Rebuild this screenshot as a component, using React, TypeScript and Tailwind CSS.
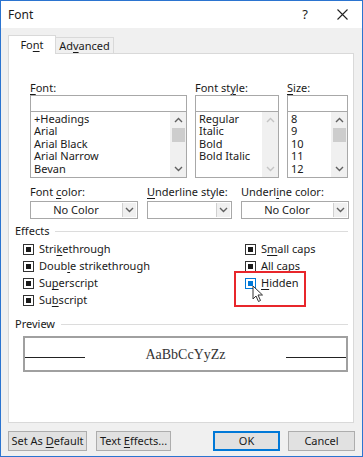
import React from "react";

const U = ({ children }: { children: React.ReactNode }) => <span className="underline underline-offset-2">{children}</span>;

function Check({ active = false }: { active?: boolean }) {
  return (
    <span
      className={`flex h-[11px] w-[11px] shrink-0 items-center justify-center border bg-white ${
        active ? "border-[#0078d7]" : "border-[#333]"
      }`}
    >
      <span className={`h-[5px] w-[5px] ${active ? "bg-[#0078d7]" : "bg-[#1a1a1a]"}`} />
    </span>
  );
}

function CheckRow({ children, active = false }: { children: React.ReactNode; active?: boolean }) {
  return (
    <div className="flex h-[17px] items-center gap-[5px]">
      <Check active={active} />
      <span>{children}</span>
    </div>
  );
}

function Chevron({ up = false, light = false }: { up?: boolean; light?: boolean }) {
  return (
    <svg width="9" height="6" viewBox="0 0 9 6" className={up ? "" : "rotate-180"}>
      <path d="M1 5 L4.5 1.5 L8 5" fill="none" stroke={light ? "#c4c4c4" : "#606060"} strokeWidth="1.4" />
    </svg>
  );
}

function Scrollbar({ disabled = false }: { disabled?: boolean }) {
  return (
    <div className="flex w-[16px] shrink-0 flex-col items-center bg-[#f0f0f0] py-[5px]">
      <Chevron up light={disabled} />
      <div className={`mt-[5px] h-[14px] w-[13px] ${disabled ? "" : "bg-[#cdcdcd]"}`} />
      <div className="flex-1" />
      <Chevron light={disabled} />
    </div>
  );
}

function ListBox({ items, width, disabled = false }: { items: string[]; width: string; disabled?: boolean }) {
  return (
    <div className={`flex flex-col ${width}`}>
      <div className="h-[17px] border border-[#a8a8a8] bg-white" />
      <div className="flex h-[66px] border border-t-0 border-[#a8a8a8] bg-white">
        <div className="flex-1 overflow-hidden pl-[3px] pt-[1px] leading-[12.4px]">
          {items.map((it) => (
            <div key={it}>{it}</div>
          ))}
        </div>
        <Scrollbar disabled={disabled} />
      </div>
    </div>
  );
}

function Dropdown({ value, width }: { value: string; width: string }) {
  return (
    <div className={`flex h-[18px] border border-[#a8a8a8] bg-white ${width}`}>
      <div className="flex flex-1 items-center justify-center">{value}</div>
      <div className="m-[1px] flex w-[14px] items-center justify-center border-l border-[#d0d0d0] bg-[#f0f0f0]">
        <Chevron light={false} />
      </div>
    </div>
  );
}

function Btn({ children, primary = false, width }: { children: React.ReactNode; primary?: boolean; width: string }) {
  return (
    <div
      className={`flex h-[20px] items-center justify-center bg-[#e1e1e1] ${width} ${
        primary ? "border-2 border-[#0078d7]" : "border border-[#adadad]"
      }`}
    >
      <span>{children}</span>
    </div>
  );
}

export default function App() {
  return (
    <div
      className="flex h-[457px] w-[363px] flex-col border border-t-0 border-[#2b74d0] bg-[#f0f0f0] text-[11px] text-[#1a1a1a]"
      style={{ fontFamily: '"Noto Sans", "Open Sans", sans-serif' }}
    >
      {/* Title bar */}
      <div className="flex h-[28px] shrink-0 items-center border-t border-[#2b74d0] bg-white pl-[7px] pr-[14px] text-[12px]">
        <span className="flex-1">Font</span>
        <span className="mr-[29px] text-[13px]">?</span>
        <svg width="11" height="11" viewBox="0 0 11 11">
          <path d="M0.5 0.5 L10.5 10.5 M10.5 0.5 L0.5 10.5" stroke="#222" strokeWidth="1.1" />
        </svg>
      </div>

      {/* Tabs */}
      <div className="mt-[7px] flex h-[19px] shrink-0 items-end pl-[7px]">
        <div className="relative z-10 flex h-[19px] w-[48px] items-center justify-center border border-b-0 border-[#d9d9d9] bg-white pt-[1px]">
          <span>Fo<U>n</U>t</span>
        </div>
        <div className="flex h-[17px] w-[58px] items-center justify-center border border-b-0 border-l-0 border-[#d9d9d9] bg-[#f0f0f0]">
          <span>Ad<U>v</U>anced</span>
        </div>
      </div>

      {/* Panel */}
      <div className="relative -mt-[1px] ml-[7px] mr-[8px] flex h-[370px] shrink-0 flex-col border border-[#d9d9d9] bg-white pl-[6px] pr-[5px] pt-[27px]">
        <div className="flex gap-[8px] pl-[15px]">
          <div className="flex flex-col">
            <div className="h-[14px] leading-[14px]"><U>F</U>ont:</div>
            <ListBox width="w-[157px]" items={["+Headings", "Arial", "Arial Black", "Arial Narrow", "Bevan"]} />
          </div>
          <div className="flex flex-col">
            <div className="h-[14px] leading-[14px]">Font st<U>y</U>le:</div>
            <ListBox width="w-[84px]" disabled items={["Regular", "Italic", "Bold", "Bold Italic"]} />
          </div>
          <div className="flex flex-col">
            <div className="h-[14px] leading-[14px]"><U>S</U>ize:</div>
            <ListBox width="w-[61px]" items={["8", "9", "10", "11", "12"]} />
          </div>
        </div>

        <div className="mt-[7px] flex gap-[9px] pl-[15px]">
          <div className="flex flex-col gap-[2px]">
            <div className="h-[14px] leading-[14px]">Font <U>c</U>olor:</div>
            <Dropdown width="w-[108px]" value="No Color" />
          </div>
          <div className="flex flex-col gap-[2px]">
            <div className="h-[14px] leading-[14px]"><U>U</U>nderline style:</div>
            <Dropdown width="w-[85px]" value="" />
          </div>
          <div className="flex flex-col gap-[2px]">
            <div className="h-[14px] leading-[14px]">Underl<U>i</U>ne color:</div>
            <Dropdown width="w-[108px]" value="No Color" />
          </div>
        </div>

        {/* Effects */}
        <div className="mt-[5px] flex h-[14px] items-center gap-[6px]">
          <span>Effects</span>
          <div className="h-px flex-1 bg-[#dcdcdc]" />
        </div>
        <div className="mt-[3px] flex pl-[8px]">
          <div className="flex w-[222px] flex-col">
            <CheckRow>Stri<U>k</U>ethrough</CheckRow>
            <CheckRow>Doub<U>l</U>e strikethrough</CheckRow>
            <CheckRow>Su<U>p</U>erscript</CheckRow>
            <CheckRow>Su<U>b</U>script</CheckRow>
          </div>
          <div className="flex flex-col">
            <CheckRow>S<U>m</U>all caps</CheckRow>
            <CheckRow><U>A</U>ll caps</CheckRow>
            <CheckRow active><U>H</U>idden</CheckRow>
          </div>
        </div>

        {/* Preview */}
        <div className="mt-[8px] flex h-[14px] items-center gap-[6px]">
          <span>Preview</span>
          <div className="h-px flex-1 bg-[#dcdcdc]" />
        </div>
        <div className="ml-[8px] mt-[5px] flex h-[36px] items-center border-2 border-[#a0a0a0] bg-white">
          <div className="mt-[6px] h-px w-[60px] bg-[#222]" />
          <div
            className="flex-1 text-center text-[14px] text-[#333]"
            style={{ fontFamily: '"Liberation Serif", "Times New Roman", serif' }}
          >
            AaBbCcYyZz
          </div>
          <div className="mt-[6px] h-px w-[60px] bg-[#222]" />
        </div>

        {/* Red highlight + cursor overlay */}
        <div className="absolute left-[225px] top-[217px] h-[36px] w-[72px] border-2 border-[#e8262b]" />
        <svg className="absolute left-[243px] top-[231px]" width="12" height="18" viewBox="0 0 12 18">
          <path d="M1 1 L1 14 L4 11 L6.5 16.5 L8.5 15.5 L6 10 L10.5 10 Z" fill="white" stroke="#333" strokeWidth="1" strokeLinejoin="round" />
        </svg>
      </div>

      {/* Buttons */}
      <div className="mt-[8px] flex px-[7px]">
        <Btn width="w-[79px]">Set As <U>D</U>efault</Btn>
        <div className="w-[9px]" />
        <Btn width="w-[75px]">Text <U>E</U>ffects...</Btn>
        <div className="flex-1" />
        <Btn primary width="w-[67px]">OK</Btn>
        <div className="w-[8px]" />
        <Btn width="w-[67px]">Cancel</Btn>
      </div>
    </div>
  );
}
